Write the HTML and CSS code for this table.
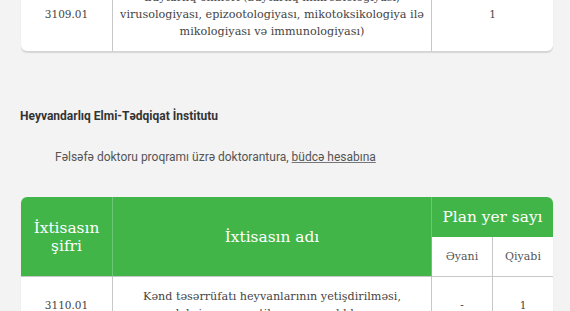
FILE: index.html
```html
<!DOCTYPE html>
<html lang="az">
<head>
<meta charset="utf-8">
<link rel="stylesheet" href="styles.css">
</head>
<body>
<div class="page">
  <table class="tbl tbl-top">
    <colgroup><col class="c1"><col class="c2"><col class="c3"><col class="c4"></colgroup>
    <tbody>
      <tr>
        <td class="num">3109.01</td>
        <td class="name">Baytarlıq elmləri (baytarlıq mikrobiologiyası, virusologiyası, epizootologiyası, mikotoksikologiya ilə mikologiyası və immunologiyası)</td>
        <td colspan="2" class="num">1</td>
      </tr>
    </tbody>
  </table>

  <h3 class="inst">Heyvandarlıq Elmi-Tədqiqat İnstitutu</h3>
  <p class="prog">Fəlsəfə doktoru proqramı üzrə doktorantura, <u>büdcə hesabına</u></p>

  <table class="tbl tbl-main">
    <colgroup><col class="c1"><col class="c2"><col class="c3"><col class="c4"></colgroup>
    <thead>
      <tr>
        <th rowspan="2" class="h-code">İxtisasın şifri</th>
        <th rowspan="2" class="h-name">İxtisasın adı</th>
        <th colspan="2" class="h-plan">Plan yer sayı</th>
      </tr>
      <tr class="sub">
        <th>Əyani</th>
        <th>Qiyabi</th>
      </tr>
    </thead>
    <tbody>
      <tr>
        <td class="num">3110.01</td>
        <td class="name">Kənd təsərrüfatı heyvanlarının yetişdirilməsi, seleksiyası, genetikası və çoxaldılması</td>
        <td class="num">-</td>
        <td class="num">1</td>
      </tr>
    </tbody>
  </table>
</div>
</body>
</html>
```

FILE: styles.css
```css
html, body {
  margin: 0;
  padding: 0;
  background: #f3f3f3;
}
.page {
  margin-top: -21px;
  padding: 0 17px 0 21px;
}
.tbl {
  width: 532px;
  border-collapse: separate;
  border-spacing: 0;
  table-layout: fixed;
  background: #fff;
  font-family: "DejaVu Serif", serif;
  color: #444;
  box-shadow: 0 2px 1px rgba(0,0,0,0.12);
}
.c1 { width: 92px; }
.c2 { width: 319px; }
.c3 { width: 61px; }
.c4 { width: 60px; }
.tbl td {
  text-align: center;
  vertical-align: middle;
  font-size: 11.2px;
  line-height: 17px;
  border-right: 1px solid #c8c8c8;
  padding: 10px 6px;
}
.tbl td.num { font-size: 10.5px; }
.tbl td.name { padding-left: 3px; padding-right: 3px; }
.tbl td:last-child { border-right: none; }
.tbl-top {
  border-radius: 0 0 6px 6px;
}
.tbl-top td { padding-top: 10px; padding-bottom: 11px; }
.tbl-main td.name { padding-left: 6px; padding-right: 6px; }
.inst {
  margin: 58px 0 0 -1px;
  font-family: Roboto, sans-serif;
  font-weight: bold;
  font-size: 12px;
  line-height: 15px;
  color: #333;
}
.prog {
  margin: 26px 0 0 34px;
  font-family: Roboto, sans-serif;
  font-size: 12px;
  line-height: 15px;
  color: #555;
}
.prog u { text-decoration-color: #777; }
.tbl-main {
  margin-top: 32px;
  border-radius: 6px 6px 0 0;
}
.tbl-main thead th {
  background: #42b549;
  color: #fff;
  font-weight: normal;
  font-size: 15.4px;
  line-height: 18px;
  border-right: 1px solid #6dc673;
  padding: 0 4px;
  height: 40px;
  box-sizing: border-box;
}
.tbl-main thead th.h-code { border-top-left-radius: 6px; }
.tbl-main thead th.h-plan { border-right: none; border-top-right-radius: 6px; }
.tbl-main thead tr.sub th {
  background: #fff;
  color: #555;
  font-size: 11px;
  border-right: 1px solid #c8c8c8;
  border-bottom: 1px solid #c8c8c8;
}
.tbl-main thead tr.sub th:last-child { border-right: none; }
.tbl-main thead th.h-code,
.tbl-main thead th.h-name { border-bottom: 1px solid #c8c8c8; }
.tbl-main td { padding-top: 11px; }
```
